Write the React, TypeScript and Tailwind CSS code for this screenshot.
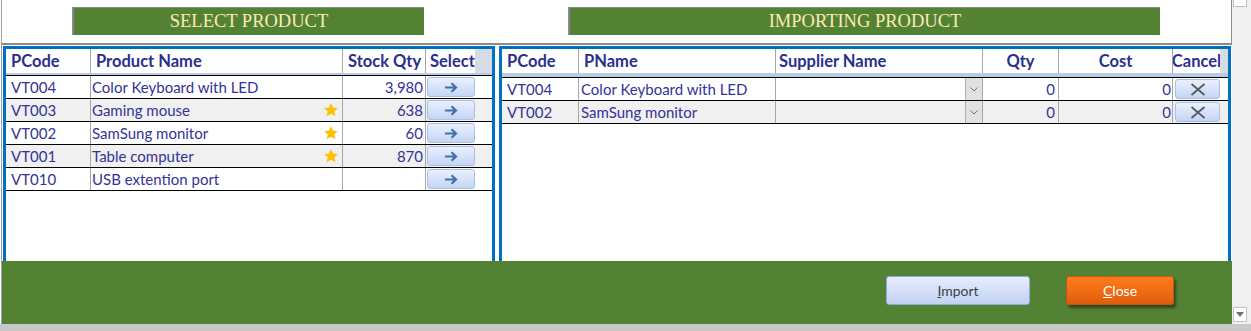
import React from 'react';

const products = [
  { code: 'VT004', name: 'Color Keyboard with LED', qty: '3,980', star: false },
  { code: 'VT003', name: 'Gaming mouse', qty: '638', star: true },
  { code: 'VT002', name: 'SamSung monitor', qty: '60', star: true },
  { code: 'VT001', name: 'Table computer', qty: '870', star: true },
  { code: 'VT010', name: 'USB extention port', qty: '', star: false },
];

const importing = [
  { code: 'VT004', name: 'Color Keyboard with LED' },
  { code: 'VT002', name: 'SamSung monitor' },
];

function Star() {
  return (
    <svg width="16" height="16" viewBox="0 0 24 24">
      <path d="M12 1.5l3.1 7 7.4.6-5.6 4.9 1.7 7.4L12 17.5l-6.6 3.9 1.7-7.4L1.5 9.1l7.4-.6z" fill="#ffc000" />
    </svg>
  );
}

function Arrow() {
  return (
    <svg width="14" height="11" viewBox="0 0 14 11">
      <path d="M1 5.5h11M7.5 1.2l4.5 4.3-4.5 4.3" fill="none" stroke="#3f6fae" strokeWidth="2.2" />
    </svg>
  );
}

function Cross() {
  return (
    <svg width="16" height="13" viewBox="0 0 16 13">
      <path d="M1.5 1l13 11M14.5 1l-13 11" fill="none" stroke="#595959" strokeWidth="1.8" />
    </svg>
  );
}

function Chevron() {
  return (
    <svg width="8" height="5" viewBox="0 0 8 5">
      <path d="M0.5 0.5l3.5 3.5 3.5-3.5" fill="none" stroke="#707070" strokeWidth="1" />
    </svg>
  );
}

const btn =
  'rounded-[3px] border border-[#a9bfe4] bg-gradient-to-b from-[#eaf0fd] to-[#c5d5f5] flex items-center justify-center';

function Banner({ text, width }: { text: string; width: string }) {
  return (
    <div
      className={`${width} h-[28px] bg-[#548235] border-l-2 border-t border-[#8a8a8a] flex items-center justify-center text-[#fcebb4] text-[18.5px] leading-none`}
      style={{ fontFamily: '"Liberation Serif", serif' }}
    >
      {text}
    </div>
  );
}

export default function App() {
  return (
    <div
      className="w-[1251px] h-[331px] bg-white flex flex-col overflow-hidden text-[15px] text-[#333399]"
      style={{ fontFamily: 'Lato, "Liberation Sans", sans-serif' }}
    >
      <div className="flex h-[324px]">
        <div className="w-[1231px] ml-[1px] border-l border-[#a0a0a0] flex flex-col">
          {/* titles */}
          <div className="h-[45px] border-b-2 border-r border-[#8c8c8c] flex items-start pt-[7px] pl-[70px] gap-[144px]">
            <Banner text="SELECT PRODUCT" width="w-[352px]" />
            <Banner text="IMPORTING PRODUCT" width="w-[592px]" />
          </div>

          {/* panels */}
          <div className="h-[216px] pt-[1px] pl-[1px] flex gap-[4px]">
            <div className="w-[492px] h-full border-[3px] border-b-0 border-[#0070c0] flex flex-col">
              <div className="flex h-[24px] font-bold text-[16.5px] text-[#2b2f8c] bg-white">
                <div className="w-[85px] border-r border-[#a6a6a6] pl-[5px] flex items-center">PCode</div>
                <div className="w-[252px] border-r border-[#a6a6a6] pl-[5px] flex items-center">Product Name</div>
                <div className="w-[83px] border-r border-[#a6a6a6] pl-[5px] flex items-center overflow-hidden whitespace-nowrap">Stock Qty</div>
                <div className="w-[49px] pl-[4px] flex items-center overflow-hidden whitespace-nowrap">Select</div>
                <div className="flex-1 bg-[#d6dce5]" />
              </div>
              <div className="h-[2px] bg-[#b8cce4]" />
              {products.map((p, i) => (
                <div
                  key={p.code}
                  className={`flex h-[23px] border-t border-black ${i === products.length - 1 ? 'h-[24px] border-b' : ''} ${i % 2 ? 'bg-[#f0f0f0]' : 'bg-white'}`}
                >
                  <div className="w-[85px] border-r border-[#a6a6a6] pl-[5px] flex items-center">{p.code}</div>
                  <div className="w-[252px] border-r border-[#a6a6a6] pl-[1px] pr-[3px] flex items-center justify-between">
                    <span>{p.name}</span>
                    {p.star && <Star />}
                  </div>
                  <div className="w-[83px] border-r border-[#a6a6a6] pr-[2px] flex items-center justify-end">{p.qty}</div>
                  <div className="w-[49px] py-[1px] pl-[1px]">
                    <div className={`${btn} h-full`}>
                      <Arrow />
                    </div>
                  </div>
                  <div className="flex-1" />
                </div>
              ))}
            </div>

            <div className="w-[732px] h-full border-[3px] border-b-0 border-[#0070c0] flex flex-col">
              <div className="flex h-[24px] font-bold text-[16.5px] text-[#2b2f8c] bg-white">
                <div className="w-[77px] border-r border-[#a6a6a6] pl-[5px] flex items-center">PCode</div>
                <div className="w-[197px] border-r border-[#a6a6a6] pl-[5px] flex items-center">PName</div>
                <div className="w-[207px] border-r border-[#a6a6a6] pl-[3px] flex items-center">Supplier Name</div>
                <div className="w-[76px] border-r border-[#a6a6a6] flex items-center justify-center">Qty</div>
                <div className="w-[114px] border-r border-[#a6a6a6] flex items-center justify-center">Cost</div>
                <div className="w-[47px] flex items-center justify-center overflow-hidden whitespace-nowrap">Cancel</div>
                <div className="flex-1 bg-[#d6dce5]" />
              </div>
              <div className="h-[4px] bg-[#b8cce4]" />
              {importing.map((p, i) => (
                <div
                  key={p.code}
                  className={`flex h-[23px] border-t border-black ${i === importing.length - 1 ? 'h-[24px] border-b' : ''} ${i % 2 ? 'bg-[#f0f0f0]' : 'bg-white'}`}
                >
                  <div className="w-[77px] border-r border-[#a6a6a6] pl-[5px] flex items-center">{p.code}</div>
                  <div className="w-[197px] border-r border-[#a6a6a6] pl-[2px] flex items-center">{p.name}</div>
                  <div className="w-[207px] border-r border-[#a6a6a6] flex justify-end">
                    <div className="w-[17px] h-full bg-[#e1e1e1] border-l border-[#b0b0b0] flex items-center justify-center">
                      <Chevron />
                    </div>
                  </div>
                  <div className="w-[76px] border-r border-[#a6a6a6] pr-[3px] flex items-center justify-end">0</div>
                  <div className="w-[114px] border-r border-[#a6a6a6] pr-[1px] flex items-center justify-end">0</div>
                  <div className="w-[47px] py-[1px] pl-[2px]">
                    <div className={`${btn} h-full`}>
                      <Cross />
                    </div>
                  </div>
                  <div className="flex-1" />
                </div>
              ))}
            </div>
          </div>

          {/* footer */}
          <div className="flex-1 bg-[#548235] flex justify-end items-start pt-[15px] pr-[58px] gap-[36px]">
            <button className="w-[144px] h-[29px] rounded-[3px] border border-[#8eaad9] bg-gradient-to-b from-[#e6edfc] to-[#c2d2f4] text-[#404040] text-[14px]">
              <u>I</u>mport
            </button>
            <button className="w-[108px] h-[29px] rounded-[3px] border border-[#c4570f] bg-gradient-to-b from-[#ff7c1c] to-[#e05c0c] text-white text-[14px] shadow-[2px_3px_3px_rgba(0,0,0,0.45)]">
              <u>C</u>lose
            </button>
          </div>
        </div>

        {/* scrollbar */}
        <div className="flex-1 bg-[#f0f0f0] flex flex-col justify-between pl-[1px] pr-[4px] pb-[2px]">
          <div className="h-[7px] bg-white border border-t-0 border-[#c0c0c0]" />
          <div className="h-[15px] bg-white border border-[#c0c0c0] flex items-center justify-center">
            <svg width="8" height="5" viewBox="0 0 8 5">
              <path d="M0 0h8L4 5z" fill="#707070" />
            </svg>
          </div>
        </div>
      </div>
      <div className="flex-1 bg-[#c8c8c8]" />
    </div>
  );
}
